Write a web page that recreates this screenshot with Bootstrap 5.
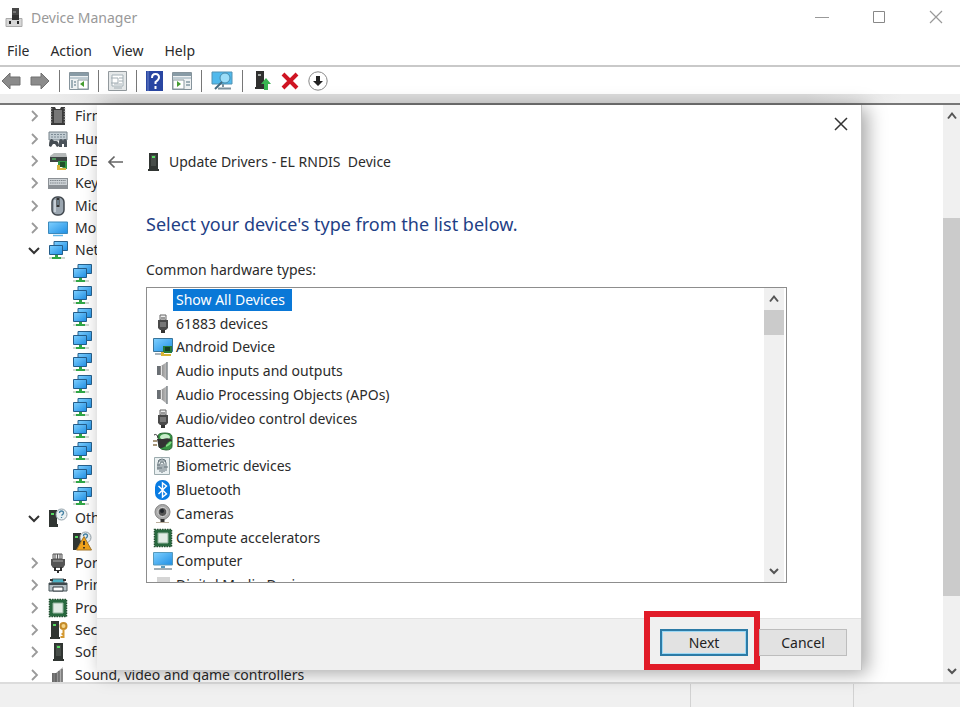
<!DOCTYPE html>
<html lang="en">
<head>
<meta charset="utf-8">
<meta name="viewport" content="width=device-width, initial-scale=1">
<title>Device Manager</title>
<link href="https://cdn.jsdelivr.net/npm/bootstrap@5.3.0/dist/css/bootstrap.min.css" rel="stylesheet">
<style>
body{font:14px/20px "Noto Sans","Open Sans",sans-serif;color:#2b2b2b;background:#fff}
svg{display:block;flex:none}
.plain{border:0;background:none;padding:0;color:inherit;display:flex;align-items:center;justify-content:center}
.i20{width:20px;height:20px}
.titlebar{height:36px;color:#999;padding-left:5px}
.winbtns{gap:9px}
.winbtns .plain{width:48px;height:34px}
.menubar{height:29px;padding-left:7px;gap:21px}
.menubar a{color:#2b2b2b;text-decoration:none}
.toolbar{height:29px;border-top:2px solid #c9c9c9;padding-left:1px;gap:9px}
.toolbar .vr{width:1px;height:22px;background:#777;opacity:1;align-self:center}
.strip{height:11px;background:linear-gradient(90deg,#ededed 5%,#dcdcdc 14%,#dcdcdc 84%,#efefef 94%);border-bottom:2px solid #777}
.stage{min-height:0}
.tree{grid-auto-rows:1fr;margin-bottom:-4px;padding-left:24px}
.tree li{display:flex;align-items:center;min-height:0;overflow:hidden}
.tree .kid{padding-left:48px}
.tree .twist{width:20px;height:20px;margin-right:4px;color:#9a9a9a}
.tree .open{color:#333}
.tree span{margin-left:7px;white-space:nowrap}
.bar{background:#f0f0f0;color:#555}
.bar .thumb{background:#cbcbcb}
.outer{width:17px}
.outer .plain{height:22px}
.dialog{top:0;left:97px;right:98px;bottom:12px;background:#fff;border-right:1px solid #c4c4c4;box-shadow:5px 3px 18px rgba(0,0,0,.36);z-index:2}
.dialog .closer{width:40px;height:38px}
.head{gap:19px;padding-left:10px;height:38px}
.caption{gap:6px}
.dialog h1{font-size:18px;line-height:26px;color:#1f3f86;margin:30px 0 0;font-weight:400}
.inner{padding:0 74px 0 49px}
.listlabel{margin-top:23px}
.listbox{height:296px;border:1px solid #8d8d8d;overflow:hidden;margin-top:7px;padding-right:2px}
.items{grid-auto-rows:1fr;height:309px;padding-left:6px}
.items button{justify-content:start;min-height:0}
.items span{padding:0 7px 0 3px;line-height:22px}
.items .chosen{background:#0a78d7;color:#fff}
.inbar{width:20px}
.inbar .plain{height:22px}
.inbar .thumb{height:25px}
.foot{height:52px;background:#f0f0f0;border-top:1px solid #e2e2e2;padding-right:14px}
.foot button{width:88px;height:27px;border:1px solid #bdbdbd;border-radius:0;background:#e2e2e2;padding:0;color:#222;font:inherit}
.foot .go{border:2px solid #2d7ba6;box-shadow:inset 0 0 0 1px #9bd8f5}
.ring{border:6px solid #e11b28;padding:12px 6px 8px 10px;background:#f0f0f0}
.foot .stop{margin:0 0 14px -1px}
.status{height:25px;background:#f0f0f0;border-top:2px solid #dcdcdc;margin-bottom:4px;z-index:1}
.status div{border-right:1px solid #d2d2d2}
.pane1{width:72%}.pane2{width:17%}
</style>
<script src="https://cdn.jsdelivr.net/npm/bootstrap@5.3.0/dist/js/bootstrap.bundle.min.js"></script>
</head>
<body>
<svg width="0" height="0" class="position-absolute" aria-hidden="true">
<defs>
<linearGradient id="blue" x2="1" y2="1"><stop stop-color="#7fd0ff"/><stop offset="1" stop-color="#1f8fe4"/></linearGradient>
<linearGradient id="grey" x2="1"><stop stop-color="#666"/><stop offset="1" stop-color="#c4c4c4"/></linearGradient>
<symbol id="right" viewBox="0 0 20 20"><path d="M8 5l5 5-5 5" fill="none" stroke="currentColor" stroke-width="1.8"/></symbol>
<symbol id="down" viewBox="0 0 20 20"><path d="M5 8l5 5 5-5" fill="none" stroke="currentColor" stroke-width="2"/></symbol>
<symbol id="sup" viewBox="0 0 12 12"><path d="M2 8.500l4-5 4 5" fill="none" stroke="currentColor" stroke-width="2"/></symbol>
<symbol id="sdown" viewBox="0 0 12 12"><path d="M2 4l4 4 4-4" fill="none" stroke="currentColor" stroke-width="2"/></symbol>
<symbol id="firm" viewBox="0 0 20 20"><path d="M3 1h4l1 2h4l1-2h4v18H3z" fill="#3a3a3a"/><path d="M6 4h8v13H6z" fill="#777"/><path d="M3.500 2v16M16.500 2v16" stroke="#999" stroke-width="1.500" stroke-dasharray="1.200 1.500"/></symbol>
<symbol id="hid" viewBox="0 0 20 20"><path d="M1 3h18v8H1z" fill="#c3cdd3" stroke="#77828a"/><path d="M3 5.500h14M3 8h14" stroke="#7c8a94" stroke-dasharray="2 1"/><path d="M1 17c0-5 1-7 3-7l2 2h2c2 0 3 2 3 5l-2 1-2-3H5l-2 3z" fill="#454c52"/><path d="M11 18v-5q0-3 2-3t2 2q0-2 2-2t2 3v5h-3v-3h-2v3z" fill="#4b535a"/></symbol>
<symbol id="ide" viewBox="0 0 20 20"><path d="M2 5l4-3h12l1 4H2z" fill="#b5b9b9"/><path d="M2 6h17v5H2z" fill="#3e4444"/><path d="M4 8h4" stroke="#57e36c"/><path d="M10 10h9v8h-3l-3-3h-3z" fill="#329545"/><path d="M12 11h5v5h-5z" fill="#20502a"/><path d="M9 14h3v3h6v2H9z" fill="#d7b63d"/></symbol>
<symbol id="key" viewBox="0 0 20 20"><path d="M0 5h20v11H0z" fill="#8b9095"/><path d="M1 6h18v6H1z" fill="#ced3d7"/><path d="M2 7.500h16M2 10h16" stroke="#7f868c" stroke-dasharray="1.500 .700"/></symbol>
<symbol id="mouse" viewBox="0 0 20 20"><rect x="4" y="1" width="12" height="18" rx="5" fill="#9ba6b0" stroke="#40474d" stroke-width="1.500"/><path d="M7 4v12" stroke="#d6dde4" stroke-width="1.500"/><path d="M10 2v9" stroke="#333" stroke-width="3"/><path d="M10 4v5" stroke="#a3c5dd"/></symbol>
<symbol id="mon" viewBox="0 0 20 20"><path d="M.500 4h19v11.500H.500z" fill="url(#blue)" stroke="#3b89bc"/><path d="M5 17.500h10" stroke="#60b7e9" stroke-width="1.500"/></symbol>
<symbol id="net" viewBox="0 0 20 20"><path d="M6 1.500h13.500v9H6z" fill="url(#blue)" stroke="#28618c"/><path d="M1.500 5.500h13v9h-13z" fill="url(#blue)" stroke="#245d8a"/><path d="M1 17h16v2H1z" fill="#d0d8d0"/><path d="M7 15h3v2h3v2H4v-2h3z" fill="#31a646"/></symbol>
<symbol id="dev" viewBox="0 0 20 20"><path d="M6 1h9v16h1v2H5v-2h1z" fill="#303532"/><path d="M8 3h5v11H8z" fill="#474d49"/><path d="M9 4h3v2H9z" fill="#58dd62"/></symbol>
<symbol id="other" viewBox="0 0 20 20"><path d="M1 2h8v14h1v3H1z" fill="#303532"/><path d="M3 5h3v2H3z" fill="#55d860"/><circle cx="13.500" cy="6.500" r="5.500" fill="#e9f0f2" stroke="#94a2aa"/><path d="M11.500 5q0-2 2-2t2 2q0 1-2 2.500M13.500 9v1" stroke="#4380a2" fill="none" stroke-width="1.300"/></symbol>
<symbol id="warn" viewBox="0 0 20 20"><use href="#other"/><path d="M12 5.500l7.500 13.500h-15z" fill="#f0a31c" stroke="#a6792b"/><path d="M12 10v4M12 16v1.500" stroke="#222" stroke-width="1.600"/></symbol>
<symbol id="port" viewBox="0 0 20 20"><path d="M5 1h9v5H5z" fill="#e9e9e9" stroke="#555"/><path d="M7 1v5M9.500 1v5M12 1v5" stroke="#555"/><path d="M3 6h14v6l-2 3H5l-2-3z" fill="#555"/><path d="M5 8h10" stroke="#aaa"/><path d="M6 14h2v3h4v-3h2v4h-3v2H9v-2H6z" fill="#303030"/></symbol>
<symbol id="printer" viewBox="0 0 20 20"><path d="M4 4h12v4H4z" fill="#4bb2c4" stroke="#56666a"/><path d="M1 8h18v8H1z" fill="#b5c0c5" stroke="#4c585d"/><path d="M1 9h18" stroke="#3e494d" stroke-width="2"/><path d="M5 12h10v4H5z" fill="#fff" stroke="#303b40"/><path d="M2 5h3M15 5h3" stroke="#333" stroke-width="2"/></symbol>
<symbol id="chip" viewBox="0 0 20 20"><path d="M1.500 1.500h17v17h-17z" fill="#27623b" stroke="#235132" stroke-width="1.500" stroke-dasharray="1.500 1"/><path d="M2 2h16v16H2z" fill="#28693f"/><path d="M5 5h10v10H5z" fill="#e1ece5" stroke="#92b59e"/></symbol>
<symbol id="sec" viewBox="0 0 20 20"><path d="M3 1h8v16h1v2H2v-2h1z" fill="#303532"/><path d="M5 4h3v2H5z" fill="#55d860"/><circle cx="15.500" cy="6" r="3" fill="#f5d485" stroke="#c48b29" stroke-width="2"/><path d="M15.500 9v9M15.500 14h-2M15.500 17h-3" stroke="#d49932" stroke-width="2"/></symbol>
<symbol id="spk" viewBox="0 0 20 20"><path d="M4 5h4l6-4v18l-6-5H4z" fill="url(#grey)"/><path d="M4 5h3v9H4z" fill="#6a6f74"/><path d="M8.500 5v9" stroke="#e3e3e3"/><path d="M14 1v18" stroke="#82888c" stroke-width="1.500"/></symbol>
<symbol id="sound" viewBox="0 0 20 20"><path d="M4 8h4l7-6v18H4z" fill="url(#grey)"/><path d="M8 8v12M11 6v14M14 4v16" stroke="#4d4d4d"/></symbol>
<symbol id="usb" viewBox="0 0 20 20"><path d="M7 1h6v5H7z" fill="#eee" stroke="#666"/><path d="M9 3v2M11 3v2" stroke="#444"/><path d="M5 6h10v8l-2 2H7l-2-2z" fill="#4a4a4a"/><path d="M7 8h6v5H7z" fill="#777"/><path d="M8 16h4v3H8z" fill="#333"/></symbol>
<symbol id="android" viewBox="0 0 20 20"><path d="M.500 1.500h19v13H.500z" fill="url(#blue)" stroke="#39749a"/><path d="M2 17h8" stroke="#a8b4bb" stroke-width="2"/><path d="M10 9h9v7h-9z" fill="#257b3b"/><path d="M12 10h5v4h-5z" fill="#173f22"/><path d="M8 15h3v2h7v2H8z" fill="#d7b334"/></symbol>
<symbol id="batt" viewBox="0 0 20 20"><path d="M5 4q0-3 7-3t7 4v9q0 4-6 4-5 0-7-3z" fill="#389644" stroke="#2a6535"/><ellipse cx="12" cy="5" rx="5" ry="3" fill="#c8edca"/><path d="M1 3q3-2 4 3" fill="none" stroke="#333"/><path d="M0 9h4M0 13h4" stroke="#8a744f" stroke-width="1.700"/><path d="M4 7h6q7-2 9 2-5 0-6 5l-4 2H6z" fill="#333"/><path d="M13 14q3-1 5-4" stroke="#83db84" stroke-width="2" fill="none"/></symbol>
<symbol id="finger" viewBox="0 0 20 20"><path d="M1.500 1.500h15v17h-15z" fill="#eaf0f1" stroke="#9cabae"/><g fill="none" stroke="#65737a"><path d="M5 14V7q0-4 4-4t4 4v8"/><path d="M7 16V8q0-2 2-2t2 2v8M9 8v9M5 5h8M4 9h3M11 11h4M4 12h5"/></g></symbol>
<symbol id="bt" viewBox="0 0 20 20"><rect x="2" width="15" height="20" rx="7" fill="#087be2"/><path d="M5.500 6l8 8L9.500 17V3l4 3-8 8" fill="none" stroke="#fff" stroke-width="1.400"/></symbol>
<symbol id="cam" viewBox="0 0 20 20"><circle cx="9.500" cy="8" r="7.500" fill="#aaa" stroke="#858585"/><circle cx="9.500" cy="8" r="4.500" fill="#555" stroke="#e1e1e1"/><circle cx="9" cy="7" r="2" fill="#20252b"/><path d="M9.500 15v3" stroke="#333" stroke-width="4"/><path d="M3 18.500h13" stroke="#baad9b"/></symbol>
<symbol id="pc" viewBox="0 0 20 20"><path d="M.500 1.500h19v12.500H.500z" fill="url(#blue)" stroke="#579abd"/><path d="M8 15h4v2H8z" fill="#5b9cbd"/><path d="M1 18h18" stroke="#a2aeb5" stroke-width="2"/></symbol>
<symbol id="media" viewBox="0 0 20 20"><path d="M4 2h13v16H4z" fill="#d5d5d5"/></symbol>
<symbol id="arrow" viewBox="0 0 20 18"><path d="M1 9l8-8v4h10v8H9v4z" fill="#8b8b8b" stroke="#707070"/></symbol>
<symbol id="win" viewBox="0 0 20 18"><path d="M.500.500h19v17H.500z" fill="#eef1f2" stroke="#85939b"/><path d="M1 2.500h18" stroke="#889ba6" stroke-width="3"/><path d="M1 6h18" stroke="#becbd2" stroke-width="2"/></symbol>
</defs>
</svg>

<div class="d-flex flex-column vh-100 overflow-hidden">
  <header class="titlebar d-flex align-items-center">
    <svg width="18" height="20" viewBox="0 0 18 20"><path d="M7 0h7v12H7z" fill="#484848"/><path d="M8 3h3v2H8z" fill="#777"/><path d="M1 10.500h16v8H1z" fill="#d7d7d7" stroke="#aaa"/><path d="M7 7h7v5H7z" fill="#333"/><path d="M5 13v3M13 13v3" stroke="#222" stroke-width="2"/></svg>
    <div class="ms-2">Device Manager</div>
    <div class="winbtns d-flex ms-auto align-self-start">
      <button class="plain" aria-label="Minimize"><svg width="14" height="14"><path d="M0 7.500h14" stroke="#999"/></svg></button>
      <button class="plain" aria-label="Maximize"><svg width="14" height="14"><path d="M1.500 1.500h11v11h-11z" fill="none" stroke="#888"/></svg></button>
      <button class="plain" aria-label="Close"><svg width="14" height="14"><path d="M1 1l12 12M13 1L1 13" stroke="#999" stroke-width="1.200"/></svg></button>
    </div>
  </header>
  <nav class="menubar d-flex align-items-center" aria-label="Menu">
    <a href="#">File</a><a href="#">Action</a><a href="#">View</a><a href="#">Help</a>
  </nav>
  <div class="toolbar d-flex align-items-center" role="toolbar" aria-label="Tools">
    <button class="plain" aria-label="Back"><svg width="20" height="18"><use href="#arrow"/></svg></button>
    <button class="plain" aria-label="Forward"><svg width="20" height="18"><g transform="translate(20 0) scale(-1 1)"><use href="#arrow"/></g></svg></button>
    <div class="vr"></div>
    <button class="plain" aria-label="Show console tree"><svg width="20" height="18"><use href="#win"/><path d="M3 8v8M5 10h2M5 13h2" stroke="#8499a4" stroke-width="1.500"/><path d="M9 8h10v9H9z" fill="#fff" stroke="#8a999f"/><path d="M15 9v6l-4-3z" fill="#459c30"/></svg></button>
    <div class="vr"></div>
    <button class="plain" aria-label="Properties"><svg width="19" height="20"><path d="M.500.500h18v19H.500z" fill="#e5e8e9" stroke="#92999d"/><path d="M4 4h11v11H4z" fill="#fff" stroke="#a3b0b6"/><path d="M3 7h7v5H3M11 7h4M11 10h4M6 13h8M6 17h8" stroke="#a3aeb4" fill="none"/></svg></button>
    <div class="vr"></div>
    <button class="plain" aria-label="Help"><svg width="17" height="20"><path d="M0 0h17v20H0z" fill="#2946a2"/><path d="M2 0v20" stroke="#6d84c9"/><path d="M6 7q0-4 3.500-4T13 6.500q0 2-3.500 4.500v2M9.500 15v3" fill="none" stroke="#fff" stroke-width="2"/></svg></button>
    <button class="plain" aria-label="Show action pane"><svg width="20" height="18"><use href="#win"/><path d="M1 8h11v9H1z" fill="#fff" stroke="#8a999f"/><path d="M5 9v6l4-3z" fill="#459c30"/><path d="M14 10h4M14 13h4" stroke="#8499a4" stroke-width="1.500"/></svg></button>
    <div class="vr"></div>
    <button class="plain" aria-label="Scan for hardware changes"><svg width="22" height="20"><path d="M1 1h20v12H1z" fill="#50b9ec" stroke="#5292b3"/><circle cx="14" cy="7" r="5" fill="#9cddf8" stroke="#468cae"/><path d="M11 11l-7 7" stroke="#426a80" stroke-width="2"/><path d="M12 13v3M7 17.500h13" stroke="#7d929d" stroke-width="2"/></svg></button>
    <div class="vr"></div>
    <button class="plain" aria-label="Update driver"><svg width="20" height="20"><path d="M4 0h8v16h1v2H3v-2h1z" fill="#30302f"/><path d="M6 3h3v2H6z" fill="#a6aba7"/><path d="M14 7l5 6h-3v6h-4v-6H9z" fill="#38b451"/></svg></button>
    <button class="plain" aria-label="Uninstall"><svg width="18" height="18"><path d="M2 2l14 14M16 2L2 16" stroke="#cf1423" stroke-width="4"/></svg></button>
    <button class="plain" aria-label="Disable"><svg width="20" height="20"><circle cx="10" cy="10" r="9.200" fill="#fff" stroke="#888"/><path d="M8 5h4v5h3l-5 5-5-5h3z" fill="#222"/></svg></button>
  </div>
  <div class="strip flex-shrink-0"></div>

  <main class="stage position-relative flex-grow-1 d-flex">
    <ul class="tree d-grid list-unstyled flex-grow-1 overflow-hidden" id="tree"></ul>
    <div class="bar outer d-flex flex-column" aria-hidden="true">
      <button class="plain" tabindex="-1"><svg width="12" height="12"><use href="#sup"/></svg></button>
      <div class="flex-grow-1 d-flex flex-column"><div style="flex:17"></div><div class="thumb" style="flex:71"></div><div style="flex:12"></div></div>
      <button class="plain" tabindex="-1"><svg width="12" height="12"><use href="#sdown"/></svg></button>
    </div>

    <section class="dialog position-absolute d-flex flex-column" role="dialog" aria-labelledby="dlgtitle">
      <button class="plain closer align-self-end" aria-label="Close dialog"><svg width="14" height="14"><path d="M1 1l12 12M13 1L1 13" stroke="#333" stroke-width="1.500"/></svg></button>
      <div class="head d-flex align-items-center">
        <button class="plain" aria-label="Go back"><svg width="17" height="14"><path d="M16 7H2M7.500 1.500L2 7l5.500 5.500" fill="none" stroke="#666" stroke-width="1.700"/></svg></button>
        <div class="caption d-flex align-items-center"><svg class="i20"><use href="#dev"/></svg><span id="dlgtitle">Update Drivers - EL RNDIS&nbsp; Device</span></div>
      </div>
      <div class="inner flex-grow-1">
        <h1>Select your device's type from the list below.</h1>
        <div class="listlabel" id="types">Common hardware types:</div>
        <div class="listbox d-flex">
          <div class="items d-grid flex-grow-1" role="listbox" aria-labelledby="types" id="items"></div>
          <div class="bar inbar d-flex flex-column" aria-hidden="true">
            <button class="plain" tabindex="-1"><svg width="12" height="12"><use href="#sup"/></svg></button>
            <div class="thumb"></div>
            <button class="plain mt-auto" tabindex="-1"><svg width="12" height="12"><use href="#sdown"/></svg></button>
          </div>
        </div>
      </div>
      <div class="foot d-flex justify-content-end align-items-end">
        <div class="ring"><button class="btn go d-block">Next</button></div>
        <button class="btn stop">Cancel</button>
      </div>
    </section>
  </main>
  <footer class="status d-flex flex-shrink-0"><div class="pane1"></div><div class="pane2"></div></footer>
</div>
<script>
const icon = n => `<svg class="i20" aria-hidden="true"><use href="#${n}"/></svg>`;
const nets = Array.from({length: 11}, () => ['kid', 'net', '']);
const rows = [
  ['right','firm','Firmware'],['right','hid','Human Interface Devices'],['right','ide','IDE ATA/ATAPI controllers'],
  ['right','key','Keyboards'],['right','mouse','Mice and other pointing devices'],['right','mon','Monitors'],
  ['down','net','Network adapters'],...nets,['down','other','Other devices'],['kid','warn',''],
  ['right','port','Ports (COM & LPT)'],['right','printer','Print queues'],['right','chip','Processors'],
  ['right','sec','Security devices'],['right','dev','Software devices'],['right','sound','Sound, video and game controllers']];
document.getElementById('tree').innerHTML = rows.map(([k, i, t]) => k === 'kid'
  ? `<li class="kid">${icon(i)}</li>`
  : `<li><button class="plain twist ${k === 'down' ? 'open' : ''}" aria-label="Toggle ${t}">${icon(k)}</button>${icon(i)}<span>${t}</span></li>`).join('');
const types = [['','Show All Devices'],['usb','61883 devices'],['android','Android Device'],['spk','Audio inputs and outputs'],
  ['spk','Audio Processing Objects (APOs)'],['usb','Audio/video control devices'],['batt','Batteries'],['finger','Biometric devices'],
  ['bt','Bluetooth'],['cam','Cameras'],['chip','Compute accelerators'],['pc','Computer'],['media','Digital Media Devices']];
document.getElementById('items').innerHTML = types.map(([i, t], n) =>
  `<button class="plain" role="option" aria-selected="${n === 0}">${icon(i)}<span class="${n ? '' : 'chosen'}">${t}</span></button>`).join('');
</script>
</body>
</html>
